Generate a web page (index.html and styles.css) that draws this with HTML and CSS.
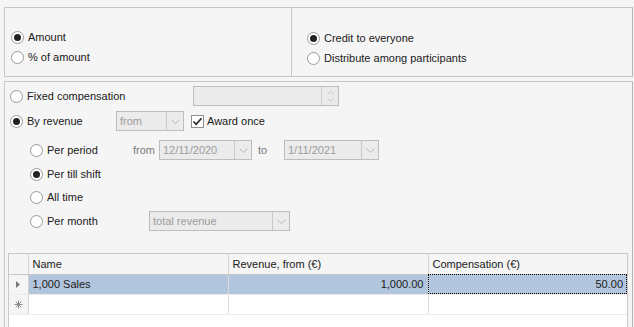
FILE: index.html
```html
<!DOCTYPE html>
<html lang="en">
<head>
    <meta charset="UTF-8" />
    <title>Compensation</title>
    <link rel="stylesheet" href="styles.css">
</head>
<body>
    <div class="top">
        <div class="group group-left">
            <div class="option"><span class="radio checked"></span><span>Amount</span></div>
            <div class="option"><span class="radio"></span><span>% of amount</span></div>
        </div>
        <div class="group group-right">
            <div class="option"><span class="radio checked"></span><span>Credit to everyone</span></div>
            <div class="option"><span class="radio"></span><span>Distribute among participants</span></div>
        </div>
    </div>

    <div class="panel">
        <div class="row row-fixed">
            <div class="option w-fixed"><span class="radio"></span><span>Fixed compensation</span></div>
            <div class="spin">
                <div class="spin-text"></div>
                <div class="spin-btns">
                    <svg width="7" height="4" viewBox="0 0 7 4"><path d="M0.5 3.5 L3.5 0.5 L6.5 3.5" fill="none" stroke="#c4c4c4" /></svg>
                    <svg width="7" height="4" viewBox="0 0 7 4"><path d="M0.5 0.5 L3.5 3.5 L6.5 0.5" fill="none" stroke="#c4c4c4" /></svg>
                </div>
            </div>
        </div>

        <div class="row row-revenue">
            <div class="option w-revenue"><span class="radio checked"></span><span>By revenue</span></div>
            <div class="combo combo-from">
                <div class="combo-text">from</div>
                <div class="combo-btn"><svg width="9" height="5" viewBox="0 0 9 5"><path d="M0.5 0.5 L4.5 4.5 L8.5 0.5" fill="none" stroke="#b8b8b8" /></svg></div>
            </div>
            <div class="check-item">
                <span class="checkbox"><svg width="11" height="11" viewBox="0 0 11 11"><path d="M1.5 5.5 L4.2 8.3 L9.5 2.2" fill="none" stroke="#222" stroke-width="1.6" /></svg></span>
                <span>Award once</span>
            </div>
        </div>

        <div class="row row-sub row-period">
            <div class="option w-period"><span class="radio"></span><span>Per period</span></div>
            <span class="caption">from</span>
            <div class="combo combo-date1">
                <div class="combo-text">12/11/2020</div>
                <div class="combo-btn"><svg width="9" height="5" viewBox="0 0 9 5"><path d="M0.5 0.5 L4.5 4.5 L8.5 0.5" fill="none" stroke="#b8b8b8" /></svg></div>
            </div>
            <span class="caption caption-to">to</span>
            <div class="combo combo-date2">
                <div class="combo-text">1/11/2021</div>
                <div class="combo-btn"><svg width="9" height="5" viewBox="0 0 9 5"><path d="M0.5 0.5 L4.5 4.5 L8.5 0.5" fill="none" stroke="#b8b8b8" /></svg></div>
            </div>
        </div>

        <div class="row row-sub row-shift">
            <div class="option"><span class="radio checked"></span><span>Per till shift</span></div>
        </div>

        <div class="row row-sub row-alltime">
            <div class="option"><span class="radio"></span><span>All time</span></div>
        </div>

        <div class="row row-sub row-month">
            <div class="option w-month"><span class="radio"></span><span>Per month</span></div>
            <div class="combo combo-month">
                <div class="combo-text">total revenue</div>
                <div class="combo-btn"><svg width="9" height="5" viewBox="0 0 9 5"><path d="M0.5 0.5 L4.5 4.5 L8.5 0.5" fill="none" stroke="#b8b8b8" /></svg></div>
            </div>
        </div>

        <div class="grid">
            <table>
                <thead>
                    <tr>
                        <th class="ind"></th>
                        <th class="col-name">Name</th>
                        <th class="col-rev">Revenue, from (€)</th>
                        <th class="col-comp">Compensation (€)</th>
                    </tr>
                </thead>
                <tbody>
                    <tr class="selected">
                        <td class="ind"><svg width="4" height="7" viewBox="0 0 4 7"><path d="M0 0 L4 3.5 L0 7 Z" fill="#7a7a7a" /></svg></td>
                        <td>1,000 Sales</td>
                        <td class="num">1,000.00</td>
                        <td class="num focused">50.00</td>
                    </tr>
                    <tr class="new-row">
                        <td class="ind"><svg width="9" height="9" viewBox="0 0 9 9"><path d="M4.5 0.5 V8.5 M0.5 4.5 H8.5 M1.7 1.7 L7.3 7.3 M7.3 1.7 L1.7 7.3" stroke="#8a8a8a" stroke-width="1" /></svg></td>
                        <td></td>
                        <td></td>
                        <td></td>
                    </tr>
                </tbody>
            </table>
        </div>
    </div>
</body>
</html>
```

FILE: styles.css
```css
html, body {
    margin: 0;
    height: 327px;
    overflow: hidden;
}

body {
    font-family: 'Liberation Sans', Arial, sans-serif;
    font-size: 11px;
    color: #202020;
    background-color: #f5f5f5;
}

.top {
    display: flex;
    height: 70px;
    margin: 7px 1px 0 4px;
    border: 1px solid #c8c8c8;
    border-right-color: #b4b4b4;
    box-sizing: border-box;
}

.group {
    display: flex;
    flex-direction: column;
    box-sizing: border-box;
}

.group-left {
    width: 287px;
    border-right: 1px solid #c8c8c8;
    padding: 19px 0 0 6px;
}

.group-right {
    padding: 20px 0 0 15px;
}

.option {
    display: flex;
    align-items: center;
    height: 20px;
    gap: 4px;
    white-space: nowrap;
}

.radio {
    position: relative;
    flex: none;
    width: 13px;
    height: 13px;
    border: 1px solid #9a9a9a;
    border-radius: 50%;
    background-color: #fff;
    box-sizing: border-box;
}

.radio.checked::after {
    content: "";
    position: absolute;
    left: 2px;
    top: 2px;
    width: 7px;
    height: 7px;
    border-radius: 50%;
    background-color: #222;
}

.panel {
    margin: 4px 1px 0 4px;
    height: 260px;
    border: 1px solid #c8c8c8;
    border-right-color: #b4b4b4;
    border-bottom: none;
    padding-top: 4px;
    box-sizing: border-box;
}

.row {
    display: flex;
    align-items: center;
    height: 20px;
    padding-left: 5px;
}

.row-sub {
    padding-left: 25px;
}

.row-revenue {
    margin-top: 5px;
}

.row-period {
    margin-top: 9px;
}

.row-shift {
    margin-top: 4px;
}

.row-alltime {
    margin-top: 3px;
}

.row-month {
    margin-top: 4px;
}

.w-fixed {
    width: 183px;
}

.w-revenue {
    width: 106px;
}

.w-period {
    width: 103px;
}

.w-month {
    width: 119px;
}

.spin, .combo {
    display: flex;
    height: 20px;
    border: 1px solid #bdbdbd;
    background-color: #ebebeb;
    box-sizing: border-box;
    color: #9c9c9c;
}

.spin {
    width: 146px;
}

.spin-text, .combo-text {
    flex: 1;
    padding-left: 3px;
    line-height: 18px;
}

.spin-btns {
    width: 16px;
    border-left: 1px solid #d0d0d0;
    display: flex;
    flex-direction: column;
    align-items: center;
    justify-content: center;
    gap: 3px;
}

.combo-btn {
    width: 16px;
    border-left: 1px solid #c8c8c8;
    display: flex;
    align-items: center;
    justify-content: center;
}

.combo-from {
    width: 68px;
}

.combo-date1 {
    width: 93px;
}

.combo-date2 {
    width: 95px;
}

.combo-month {
    width: 141px;
}

.check-item {
    display: flex;
    align-items: center;
    gap: 3px;
    margin-left: 7px;
}

.checkbox {
    width: 13px;
    height: 13px;
    border: 1px solid #8f8f8f;
    background-color: #fff;
    box-sizing: border-box;
    display: flex;
    align-items: center;
    justify-content: center;
}

.caption {
    width: 26px;
    color: #7a7a7a;
}

.caption-to {
    margin-left: 6px;
}

.grid {
    margin: 22px 0 0 3px;
    width: 620px;
    height: 80px;
    border: 1px solid #c8c8c8;
    border-bottom: none;
    background-color: #fff;
    box-sizing: border-box;
}

table {
    border-collapse: collapse;
    width: 618px;
    table-layout: fixed;
}

th, td {
    height: 20px;
    padding: 0 4px;
    text-align: left;
    font-weight: normal;
    white-space: nowrap;
    box-sizing: border-box;
}

th {
    background-color: #f5f5f5;
    border-bottom: 1px solid #c8c8c8;
    border-right: 1px solid #d4d4d4;
}

td {
    border-right: 1px solid #dcdcdc;
    border-bottom: 1px solid #ececec;
}

th:last-child, td:last-child {
    border-right: none;
}

.ind {
    width: 19px;
    padding: 0;
    text-align: center;
    background-color: #f5f5f5;
    border-right: 1px solid #d4d4d4;
}

td.ind svg {
    display: block;
    margin: 0 auto;
}

.col-name {
    width: 200px;
}

.col-rev {
    width: 200px;
}

tr.selected td {
    background-color: #b1c5dd;
}

tr.selected td.ind {
    background-color: #f5f5f5;
}

.num {
    text-align: right;
}

td.focused {
    outline: 1px dotted #000;
    outline-offset: -1px;
}
```
